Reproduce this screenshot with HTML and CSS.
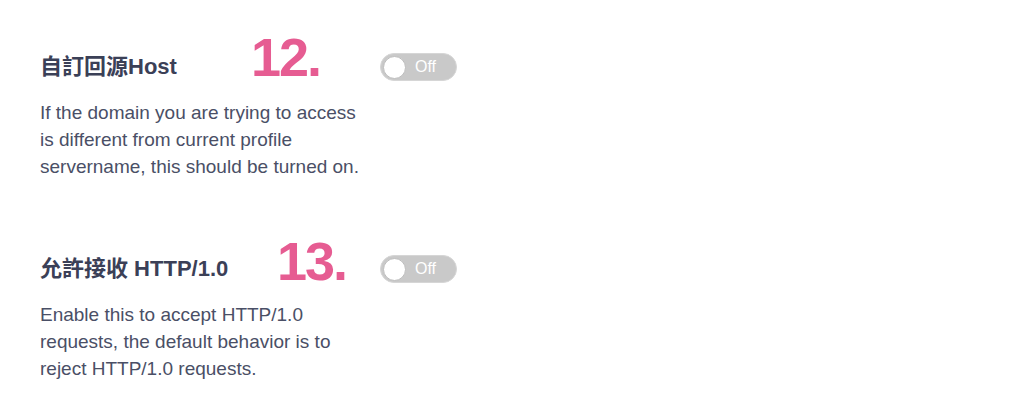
FILE: index.html
```html
<!DOCTYPE html>
<html lang="zh-Hant">
<head>
<meta charset="utf-8">
<title>Settings</title>
<link rel="stylesheet" href="styles.css">
</head>
<body>
<main class="page">
  <section class="setting">
    <div class="setting-head">
      <h3 class="setting-title">自訂回源Host</h3>
      <span class="toggle"><span class="knob"></span><span class="toggle-text">Off</span></span>
      <span class="step step-12">12.</span>
    </div>
    <p class="setting-desc">If the domain you are trying to access is different from current profile servername, this should be turned on.</p>
  </section>
  <section class="setting">
    <div class="setting-head">
      <h3 class="setting-title">允許接收 HTTP/1.0</h3>
      <span class="toggle"><span class="knob"></span><span class="toggle-text">Off</span></span>
      <span class="step step-13">13.</span>
    </div>
    <p class="setting-desc">Enable this to accept HTTP/1.0 requests, the default behavior is to reject HTTP/1.0 requests.</p>
  </section>
</main>
</body>
</html>
```

FILE: styles.css
```css
html, body {
  margin: 0;
  padding: 0;
  background: #ffffff;
}

body {
  font-family: "Liberation Sans", "Noto Sans CJK TC", sans-serif;
  color: #3f445b;
}

.page {
  padding: 53px 0 0 40px;
  display: flex;
  flex-direction: column;
  gap: 75px;
}

.setting {
  display: flex;
  flex-direction: column;
  gap: 18px;
}

.setting-head {
  position: relative;
  display: flex;
  align-items: center;
  height: 28px;
}

.setting-title {
  margin: 0;
  width: 340px;
  font-size: 22px;
  font-weight: bold;
  line-height: 28px;
  color: #3b4057;
  font-family: "Liberation Sans", "Noto Sans CJK TC", sans-serif;
}

.toggle {
  box-sizing: border-box;
  display: flex;
  align-items: center;
  width: 77px;
  height: 28px;
  border-radius: 14px;
  background: #c9c9c9;
  border: 1px solid #d6d6d6;
  padding: 0 2px;
  gap: 9px;
}

.knob {
  box-sizing: border-box;
  width: 23px;
  height: 23px;
  border-radius: 50%;
  background: #ffffff;
  border: 1px solid #bdbdbd;
}

.toggle-text {
  font-size: 16px;
  color: #ffffff;
  line-height: 1;
}

.step {
  position: absolute;
  font-size: 54px;
  line-height: 54px;
  font-weight: bold;
  letter-spacing: -2px;
  color: #e65c92;
}

.step-12 {
  left: 211px;
  top: -23px;
}

.step-13 {
  left: 237px;
  top: -21px;
}

.setting-desc {
  margin: 0;
  width: 325px;
  font-size: 19px;
  line-height: 27px;
  color: #4a4f66;
}
```
